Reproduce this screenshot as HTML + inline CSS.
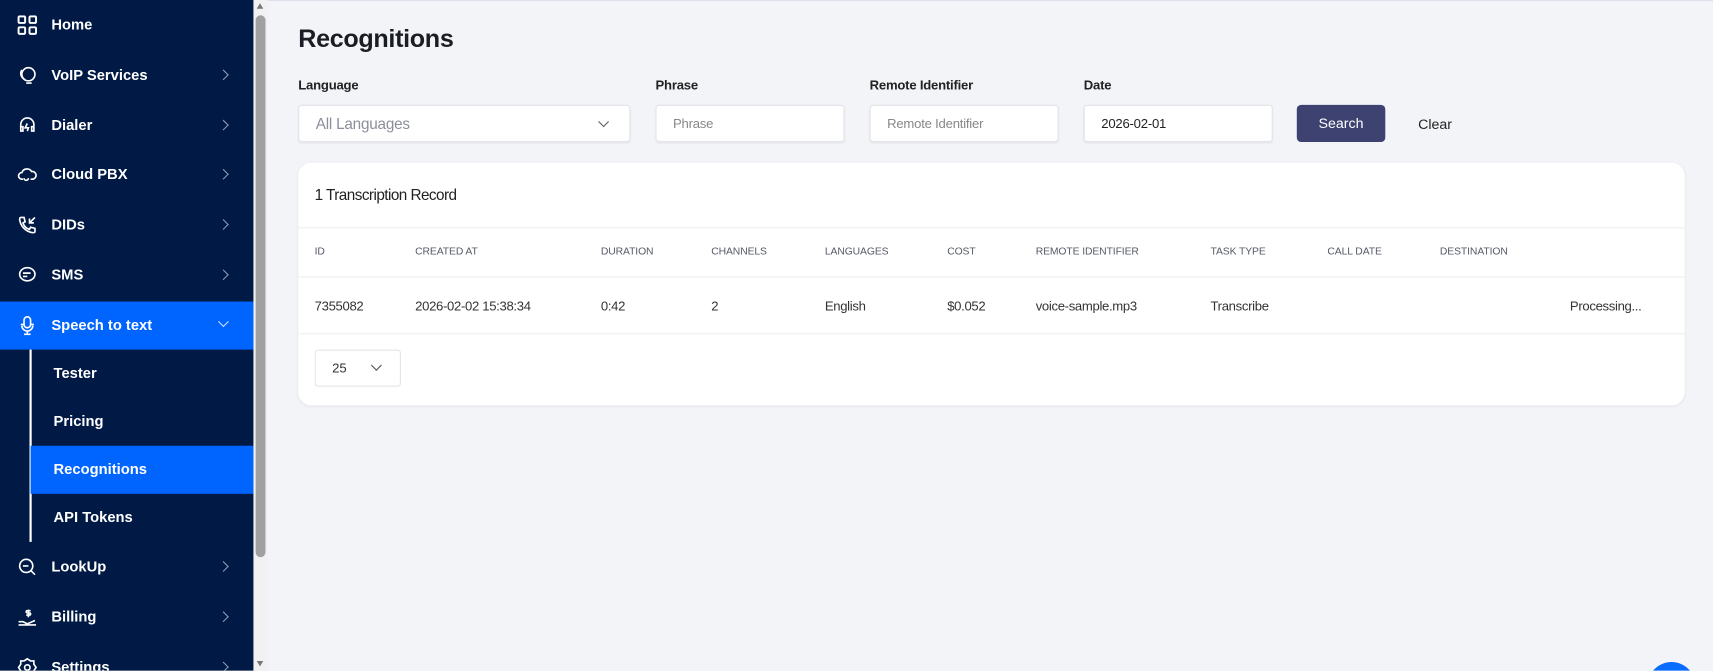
<!DOCTYPE html>
<html><head><style>
*{box-sizing:border-box;margin:0;padding:0}
html,body{width:1713px;height:671px;overflow:hidden;background:#f3f4f8}
#w{width:1568px;height:614px;transform:scale(1.0925);transform-origin:0 0;position:absolute;left:0;top:0;font-family:"Liberation Sans",sans-serif;background:#f3f4f8;overflow:hidden}
.sb{position:absolute;left:0;top:0;width:232px;height:614px;background:#001a45;color:#fff;overflow:hidden}
.it{position:absolute;left:0;width:232px;height:44px;font-weight:bold;font-size:13.5px;line-height:44px}
.it .t{position:absolute;left:47px}
.it svg{position:absolute;left:16px;top:13px}
.it .ch{position:absolute;left:201px;top:18px;width:7px;height:7px;border-right:1.3px solid #8a98b8;border-top:1.3px solid #8a98b8;transform:rotate(45deg)}
.sub{position:absolute;left:28px;width:204px;height:44px;line-height:44px;font-weight:bold;font-size:13.5px;padding-left:21px}
.scr{position:absolute;left:232px;top:0;width:13px;height:614px;background:#f1f1f1}
.lbl{position:absolute;top:71px;font-size:12px;font-weight:bold;color:#222;letter-spacing:-.2px}
.in{position:absolute;top:96px;height:34px;background:#fff;border:1px solid #e3e5ea;border-radius:3px;font-size:12px;color:#888;line-height:32px;padding-left:15px;box-shadow:0 1px 2px rgba(0,0,0,.06);letter-spacing:-.2px}
.card{position:absolute;left:273px;top:149px;width:1269px;height:222px;background:#fff;border-radius:12px;box-shadow:0 1px 3px rgba(0,0,0,.06)}
.hr{position:absolute;left:0;width:1269px;height:1px;background:#eceef2}
.th{position:absolute;top:76px;font-size:9.5px;color:#555a66;letter-spacing:-.1px}
.td{position:absolute;top:124px;font-size:12px;color:#333;letter-spacing:-.3px}
</style></head><body><div id="w">
<div style="position:absolute;left:245px;top:0;right:0;height:1px;background:#dde2ec"></div>
<div class="sb">
<div class="it" style="top:1px"><svg width="18" height="18" viewBox="0 0 18 18" fill="none" stroke="#fff" stroke-width="1.8"><rect x="1" y="1" width="6" height="6" rx="1"/><rect x="11" y="1" width="6" height="6" rx="1"/><rect x="1" y="11" width="6" height="6" rx="1"/><rect x="11" y="11" width="6" height="6" rx="1"/></svg><span class="t">Home</span></div>
<div class="it" style="top:47px"><svg width="18" height="18" viewBox="0 0 18 18" fill="none" stroke="#fff" stroke-width="1.5"><circle cx="10" cy="8" r="6"/><path d="M4 4c-2 3-1 7 3 9M8 16h5"/></svg><span class="t">VoIP Services</span><i class="ch"></i></div>
<div class="it" style="top:93px"><svg width="18" height="18" viewBox="0 0 18 18" fill="none" stroke="#fff" stroke-width="1.5"><path d="M3 11V8a6 6 0 0 1 12 0v3M3 10h2v4H3zM13 10h2v4h-2zM9 7l-2 4h3l-1 3"/></svg><span class="t">Dialer</span><i class="ch"></i></div>
<div class="it" style="top:138px"><svg width="18" height="18" viewBox="0 0 18 18" fill="none" stroke="#fff" stroke-width="1.5"><path d="M5 13H4a3 3 0 0 1 0-6 5 5 0 0 1 9-1 3.5 3.5 0 0 1 1 7h-2M6 12a2 2 0 1 0 4 0"/></svg><span class="t">Cloud PBX</span><i class="ch"></i></div>
<div class="it" style="top:184px"><svg width="18" height="18" viewBox="0 0 18 18" fill="none" stroke="#fff" stroke-width="1.5"><path d="M3 2l3 0 1 4-2 1a9 9 0 0 0 6 6l1-2 4 1v3c0 1-1 1-2 1A14 14 0 0 1 2 4c0-1 0-2 1-2zM16 2l-5 5M11 3v4h4"/></svg><span class="t">DIDs</span><i class="ch"></i></div>
<div class="it" style="top:230px"><svg width="18" height="18" viewBox="0 0 18 18" fill="none" stroke="#fff" stroke-width="1.5"><ellipse cx="9" cy="8" rx="7" ry="6"/><path d="M5 7h7M5 10h4"/></svg><span class="t">SMS</span><i class="ch"></i></div>
<div class="it" style="top:276px;background:#0064ff"><svg width="18" height="18" viewBox="0 0 18 18" fill="none" stroke="#fff" stroke-width="1.5"><rect x="6" y="1" width="6" height="10" rx="3"/><path d="M3 8h3M12 8h3M4 9a5 5 0 0 0 10 0M9 14v3M6 17h6"/></svg><span class="t">Speech to text</span><i class="ch" style="transform:rotate(135deg);top:15px;border-color:#cfe0ff"></i></div>
<div style="position:absolute;left:27px;top:320px;width:2px;height:176px;background:#fff"></div>
<div class="sub" style="top:320px">Tester</div>
<div class="sub" style="top:364px">Pricing</div>
<div class="sub" style="top:408px;background:#0064ff">Recognitions</div>
<div class="sub" style="top:452px">API Tokens</div>
<div class="it" style="top:497px"><svg width="18" height="18" viewBox="0 0 18 18" fill="none" stroke="#fff" stroke-width="1.5"><circle cx="8" cy="8" r="6"/><path d="M12.5 12.5L16 16M5 8h5"/></svg><span class="t">LookUp</span><i class="ch"></i></div>
<div class="it" style="top:543px"><svg width="18" height="18" viewBox="0 0 18 18" fill="none" stroke="#fff" stroke-width="1.5"><path d="M1 13h4l4 2 7-3M1 16h16M10 2v7M12 3H9a1 1 0 0 0 0 2h2a1 1 0 0 1 0 2H8"/></svg><span class="t">Billing</span><i class="ch"></i></div>
<div class="it" style="top:589px;height:25px;overflow:hidden"><svg width="18" height="18" viewBox="0 0 18 18" fill="none" stroke="#fff" stroke-width="1.5"><path d="M9 1l3 2h3v3l2 3-2 3v3h-3l-3 2-3-2H3v-3L1 9l2-3V3h3z"/><circle cx="9" cy="9" r="2.5"/></svg><span class="t">Settings</span><i class="ch"></i></div>
</div>
<div class="scr"><div style="position:absolute;left:2px;top:14px;width:9px;height:496px;background:#a0a0a0;border-radius:5px"></div>
<div style="position:absolute;left:3px;top:3px;border:3.5px solid transparent;border-bottom:5px solid #777;border-top:0"></div>
<div style="position:absolute;left:3px;top:605px;border:3.5px solid transparent;border-top:5px solid #777;border-bottom:0"></div></div>

<div style="position:absolute;left:273px;top:22px;font-size:23px;font-weight:bold;color:#1a1d24;letter-spacing:-.3px">Recognitions</div>
<div class="lbl" style="left:273px">Language</div>
<div class="lbl" style="left:600px">Phrase</div>
<div class="lbl" style="left:796px">Remote Identifier</div>
<div class="lbl" style="left:992px">Date</div>
<div class="in" style="left:273px;width:304px;font-size:14px;color:#8a8f99">All Languages<i style="position:absolute;right:20px;top:11px;width:7px;height:7px;border-right:1.3px solid #666;border-bottom:1.3px solid #666;transform:rotate(45deg)"></i></div>
<div class="in" style="left:600px;width:173px">Phrase</div>
<div class="in" style="left:796px;width:173px">Remote Identifier</div>
<div class="in" style="left:992px;width:173px;color:#222">2026-02-01</div>
<div style="position:absolute;left:1187px;top:96px;width:81px;height:34px;background:#3d4270;border-radius:4px;color:#fff;font-size:13px;text-align:center;line-height:34px">Search</div>
<div style="position:absolute;left:1298px;top:106px;font-size:13px;color:#222">Clear</div>

<div class="card">
<div style="position:absolute;left:15px;top:21px;font-size:14px;color:#222;letter-spacing:-.5px">1 Transcription Record</div>
<div class="hr" style="top:59px"></div>
<div class="th" style="left:15px">ID</div><div class="th" style="left:107px">CREATED AT</div><div class="th" style="left:277px">DURATION</div><div class="th" style="left:378px">CHANNELS</div><div class="th" style="left:482px">LANGUAGES</div><div class="th" style="left:594px">COST</div><div class="th" style="left:675px">REMOTE IDENTIFIER</div><div class="th" style="left:835px">TASK TYPE</div><div class="th" style="left:942px">CALL DATE</div><div class="th" style="left:1045px">DESTINATION</div>
<div class="hr" style="top:104px"></div>
<div class="td" style="left:15px">7355082</div><div class="td" style="left:107px">2026-02-02 15:38:34</div><div class="td" style="left:277px">0:42</div><div class="td" style="left:378px">2</div><div class="td" style="left:482px">English</div><div class="td" style="left:594px">$0.052</div><div class="td" style="left:675px">voice-sample.mp3</div><div class="td" style="left:835px">Transcribe</div><div class="td" style="left:1164px">Processing...</div>
<div class="hr" style="top:156px"></div>
<div style="position:absolute;left:15px;top:171px;width:79px;height:34px;border:1px solid #e3e5ea;border-radius:3px;font-size:12px;color:#333;line-height:32px;padding-left:15px">25<i style="position:absolute;left:52px;top:10px;width:7px;height:7px;border-right:1.3px solid #555;border-bottom:1.3px solid #555;transform:rotate(45deg)"></i></div>
</div>
<div style="position:absolute;left:1508px;top:606px;width:44px;height:8px;overflow:hidden"><div style="width:44px;height:44px;border-radius:50%;background:#0a6cff"></div></div>
</div></body></html>
